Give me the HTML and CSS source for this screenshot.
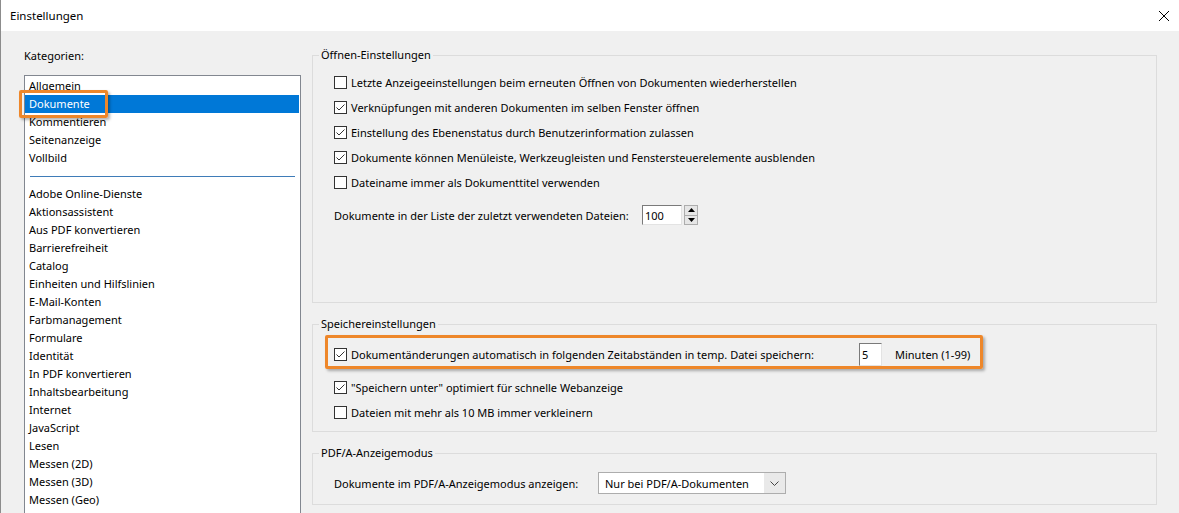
FILE: index.html
```html
<!DOCTYPE html>
<html lang="de">
<head>
    <meta charset="UTF-8">
    <title>Einstellungen</title>
    <link rel="stylesheet" href="styles.css">
</head>
<body>
    <div class="window">
        <div class="titlebar">
            <span>Einstellungen</span>
            <svg class="close" width="12" height="12" viewBox="0 0 12 12">
                <path d="M1 1 L11 11 M11 1 L1 11" stroke="#000" stroke-width="1" fill="none"/>
            </svg>
        </div>

        <div class="content">
            <div class="categories">
                <div class="cat-label">Kategorien:</div>
                <div class="listbox">
                    <div class="item">Allgemein</div>
                    <div class="item selected">Dokumente<span class="mark mark-doc"></span></div>
                    <div class="item">Kommentieren</div>
                    <div class="item">Seitenanzeige</div>
                    <div class="item">Vollbild</div>
                    <div class="separator"><span></span></div>
                    <div class="item">Adobe Online-Dienste</div>
                    <div class="item">Aktionsassistent</div>
                    <div class="item">Aus PDF konvertieren</div>
                    <div class="item">Barrierefreiheit</div>
                    <div class="item">Catalog</div>
                    <div class="item">Einheiten und Hilfslinien</div>
                    <div class="item">E-Mail-Konten</div>
                    <div class="item">Farbmanagement</div>
                    <div class="item">Formulare</div>
                    <div class="item">Identität</div>
                    <div class="item">In PDF konvertieren</div>
                    <div class="item">Inhaltsbearbeitung</div>
                    <div class="item">Internet</div>
                    <div class="item">JavaScript</div>
                    <div class="item">Lesen</div>
                    <div class="item">Messen (2D)</div>
                    <div class="item">Messen (3D)</div>
                    <div class="item">Messen (Geo)</div>
                </div>
            </div>

            <div class="settings">
                <div class="group group-open">
                    <div class="group-title">Öffnen-Einstellungen</div>
                    <div class="group-body">
                        <div class="check-row"><span class="checkbox"></span><span>Letzte Anzeigeeinstellungen beim erneuten Öffnen von Dokumenten wiederherstellen</span></div>
                        <div class="check-row"><span class="checkbox checked"></span><span>Verknüpfungen mit anderen Dokumenten im selben Fenster öffnen</span></div>
                        <div class="check-row"><span class="checkbox checked"></span><span>Einstellung des Ebenenstatus durch Benutzerinformation zulassen</span></div>
                        <div class="check-row"><span class="checkbox checked"></span><span>Dokumente können Menüleiste, Werkzeugleisten und Fenstersteuerelemente ausblenden</span></div>
                        <div class="check-row"><span class="checkbox"></span><span>Dateiname immer als Dokumenttitel verwenden</span></div>
                        <div class="field-row recent-row">
                            <span class="field-label recent-label">Dokumente in der Liste der zuletzt verwendeten Dateien:</span>
                            <span class="textbox recent-box">100</span>
                            <span class="spinner">
                                <span class="spin-btn"><svg width="7" height="4" viewBox="0 0 7 4"><path d="M0 4 L3.5 0 L7 4 Z" fill="#000"/></svg></span>
                                <span class="spin-btn"><svg width="7" height="4" viewBox="0 0 7 4"><path d="M0 0 L3.5 4 L7 0 Z" fill="#000"/></svg></span>
                            </span>
                        </div>
                    </div>
                </div>

                <div class="group group-save">
                    <div class="group-title">Speichereinstellungen</div>
                    <div class="group-body">
                        <div class="check-row autosave-row">
                            <span class="checkbox checked"></span>
                            <span class="autosave-label">Dokumentänderungen automatisch in folgenden Zeitabständen in temp. Datei speichern:</span>
                            <span class="textbox minutes-box">5</span>
                            <span class="minutes-unit">Minuten (1-99)</span>
                            <span class="mark mark-save"></span>
                        </div>
                        <div class="check-row"><span class="checkbox checked"></span><span>"Speichern unter" optimiert für schnelle Webanzeige</span></div>
                        <div class="check-row"><span class="checkbox"></span><span>Dateien mit mehr als 10 MB immer verkleinern</span></div>
                    </div>
                </div>

                <div class="group group-pdfa">
                    <div class="group-title">PDF/A-Anzeigemodus</div>
                    <div class="group-body">
                        <div class="field-row pdfa-row">
                            <span class="field-label pdfa-label">Dokumente im PDF/A-Anzeigemodus anzeigen:</span>
                            <span class="select">
                                <span class="select-value">Nur bei PDF/A-Dokumenten</span>
                                <span class="select-arrow"><svg width="9" height="5" viewBox="0 0 9 5"><path d="M0.5 0.5 L4.5 4.5 L8.5 0.5" stroke="#444" stroke-width="1" fill="none"/></svg></span>
                            </span>
                        </div>
                    </div>
                </div>
            </div>
        </div>
    </div>
</body>
</html>
```

FILE: styles.css
```css
* {
    box-sizing: border-box;
}
html, body {
    margin: 0;
    padding: 0;
}
body {
    font-family: "Noto Sans", "Open Sans", sans-serif;
    font-size: 11px;
    color: #000;
    background-color: #f0f0f0;
    overflow: hidden;
}
.window {
    width: 1179px;
    height: 513px;
    background-color: #f0f0f0;
    border-left: 1px solid #8c8c8c;
    overflow: hidden;
}
.titlebar {
    height: 31px;
    background-color: #fff;
    display: flex;
    align-items: center;
    justify-content: space-between;
    padding: 0 9px 0 9px;
    font-size: 11.5px;
}
.close {
    display: block;
}
.content {
    display: flex;
    padding-left: 23px;
}

/* category list */
.categories {
    width: 277px;
}
.cat-label {
    height: 44px;
    padding-top: 16px;
    line-height: 18px;
}
.listbox {
    height: 460px;
    border: 1px solid #828790;
    background-color: #fff;
    padding: 1px 1px 0 0;
}
.item {
    height: 18px;
    line-height: 18px;
    padding-left: 4px;
    white-space: nowrap;
}
.item.selected {
    position: relative;
    background-color: #0078d7;
    color: #fff;
}
.separator {
    height: 18px;
    display: flex;
    align-items: center;
    padding: 0 4px 0 5px;
}
.separator span {
    flex: 1;
    border-top: 1px solid #3f7cb8;
}

/* orange annotation frames */
.mark {
    position: absolute;
    border: 3px solid #ee872a;
    border-radius: 2px;
    box-shadow: 2px 2px 3px rgba(0, 0, 0, 0.3);
    pointer-events: none;
}
.mark-doc {
    left: -6px;
    top: -5px;
    width: 89px;
    height: 28px;
}
.mark-save {
    left: -9px;
    top: -5px;
    width: 658px;
    height: 34px;
}

/* settings groups */
.settings {
    width: 845px;
    margin-left: 11px;
    padding-top: 24px;
}
.group {
    border: 1px solid #dcdcdc;
}
.group-save, .group-pdfa {
    margin-top: 21px;
}
.group-open {
    height: 248px;
}
.group-save {
    height: 108px;
}
.group-pdfa {
    height: 52px;
}
.group-title {
    width: fit-content;
    height: 18px;
    line-height: 18px;
    margin: -10px 0 0 6px;
    padding: 0 2px;
    background-color: #f0f0f0;
}
.group-body {
    padding: 6px 0 0 21px;
}
.group-save .group-body {
    padding-top: 7px;
}
.group-pdfa .group-body {
    padding-top: 9px;
}
.check-row {
    display: flex;
    align-items: center;
    height: 25px;
    gap: 4px;
    white-space: nowrap;
}
.checkbox {
    width: 13px;
    height: 13px;
    flex: none;
    border: 1px solid #333;
    background-color: #fff;
}
.checkbox.checked {
    background: #fff url("data:image/svg+xml,%3Csvg xmlns='http://www.w3.org/2000/svg' width='11' height='11' viewBox='0 0 11 11'%3E%3Cpath d='M1.5 5.5 L4 8 L9.5 2.5' stroke='%23333' stroke-width='1' fill='none'/%3E%3C/svg%3E") no-repeat center;
}
.autosave-row {
    position: relative;
    height: 29px;
    margin-bottom: 6px;
}
.autosave-label {
    width: 504px;
    flex: none;
}
.textbox {
    display: flex;
    align-items: center;
    background-color: #fff;
    border-style: solid;
    border-width: 1px;
    border-color: #7a7a7a #e3e3e3 #e3e3e3 #7a7a7a;
    padding-left: 2px;
}
.minutes-box {
    width: 23px;
    height: 23px;
}
.minutes-unit {
    margin-left: 9px;
}
.field-row {
    display: flex;
    align-items: center;
    white-space: nowrap;
}
.recent-row {
    height: 26px;
    margin-top: 7px;
}
.recent-label {
    width: 308px;
}
.recent-box {
    width: 40px;
    height: 20px;
}
.spinner {
    display: flex;
    flex-direction: column;
    margin-left: 2px;
    width: 14px;
    height: 20px;
}
.spin-btn {
    flex: 1;
    display: flex;
    align-items: center;
    justify-content: center;
    background-color: #e6e6e6;
    border: 1px solid #adadad;
}
.spin-btn + .spin-btn {
    border-top: none;
}
.spin-btn svg {
    display: block;
}
.pdfa-row {
    height: 24px;
}
.pdfa-label {
    width: 264px;
}
.select {
    display: flex;
    width: 188px;
    height: 22px;
    border: 1px solid #adadad;
    background-color: #fff;
}
.select-value {
    flex: 1;
    display: flex;
    align-items: center;
    padding-left: 6px;
}
.select-arrow {
    width: 21px;
    display: flex;
    align-items: center;
    justify-content: center;
    background-color: #e9e9e9;
}
.select-arrow svg {
    display: block;
}
```
